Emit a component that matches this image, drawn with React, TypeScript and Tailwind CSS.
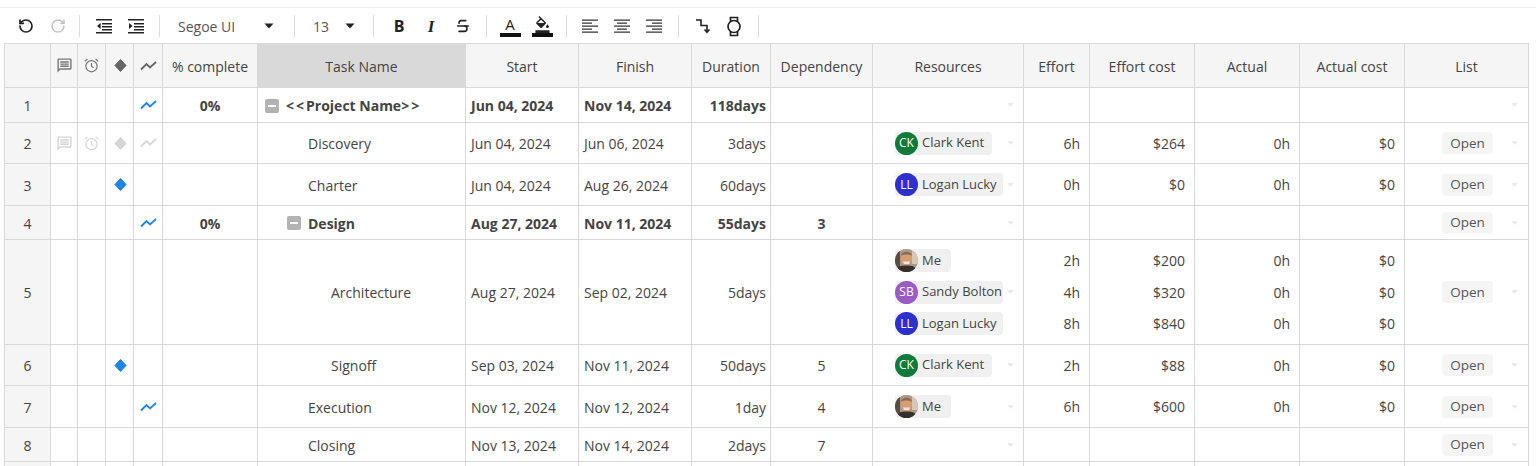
import type { ReactNode } from 'react'
import { RotateCcw, RotateCw, Strikethrough } from 'lucide-react'
import { MdFormatColorFill, MdOutlineMessage } from 'react-icons/md'

const COLS =
  'grid grid-cols-[46px_27px_28px_28px_29px_95px_208px_113px_113px_79px_102px_151px_66px_105px_105px_105px_124px]'

type Person = { name: string; initials: string; color: string; width: string }

const CLARK: Person = { name: 'Clark Kent', initials: 'CK', color: 'bg-[#0f7b3a]', width: 'w-[97px]' }
const LOGAN: Person = { name: 'Logan Lucky', initials: 'LL', color: 'bg-[#2e2fcf]', width: 'w-[108px]' }
const SANDY: Person = { name: 'Sandy Bolton', initials: 'SB', color: 'bg-[#9a5bc4]', width: 'w-[108px]' }
const ME: Person = { name: 'Me', initials: '', color: '', width: 'w-[56px]' }

type Row = {
  id: number
  height: string
  icons?: 'faded' | 'trend' | 'diamond'
  percent?: string
  name: ReactNode
  indent: string
  bold?: boolean
  expander?: boolean
  start: string
  finish: string
  duration: string
  dep?: string
  people?: Person[]
  effort?: string[]
  cost?: string[]
  actual?: string[]
  actualCost?: string[]
  list?: boolean
}

const PROJECT_NAME = (
  <>
    <span className="tracking-[2px]">&lt;&lt;</span>Project Name<span className="tracking-[2px]">&gt;&gt;</span>
  </>
)

const ROWS: Row[] = [
  { id: 1, height: 'h-[35px]', icons: 'trend', percent: '0%', name: PROJECT_NAME, indent: 'pl-[7px]', bold: true, expander: true, start: 'Jun 04, 2024', finish: 'Nov 14, 2024', duration: '118days' },
  { id: 2, height: 'h-[41px]', icons: 'faded', name: 'Discovery', indent: 'pl-[50px]', start: 'Jun 04, 2024', finish: 'Jun 06, 2024', duration: '3days', people: [CLARK], effort: ['6h'], cost: ['$264'], actual: ['0h'], actualCost: ['$0'], list: true },
  { id: 3, height: 'h-[42px]', icons: 'diamond', name: 'Charter', indent: 'pl-[50px]', start: 'Jun 04, 2024', finish: 'Aug 26, 2024', duration: '60days', people: [LOGAN], effort: ['0h'], cost: ['$0'], actual: ['0h'], actualCost: ['$0'], list: true },
  { id: 4, height: 'h-[34px]', icons: 'trend', percent: '0%', name: 'Design', indent: 'pl-[29px]', bold: true, expander: true, start: 'Aug 27, 2024', finish: 'Nov 11, 2024', duration: '55days', dep: '3', list: true },
  { id: 5, height: 'h-[105px]', name: 'Architecture', indent: 'pl-[73px]', start: 'Aug 27, 2024', finish: 'Sep 02, 2024', duration: '5days', people: [ME, SANDY, LOGAN], effort: ['2h', '4h', '8h'], cost: ['$200', '$320', '$840'], actual: ['0h', '0h', '0h'], actualCost: ['$0', '$0', '$0'], list: true },
  { id: 6, height: 'h-[41px]', icons: 'diamond', name: 'Signoff', indent: 'pl-[73px]', start: 'Sep 03, 2024', finish: 'Nov 11, 2024', duration: '50days', dep: '5', people: [CLARK], effort: ['2h'], cost: ['$88'], actual: ['0h'], actualCost: ['$0'], list: true },
  { id: 7, height: 'h-[42px]', icons: 'trend', name: 'Execution', indent: 'pl-[50px]', start: 'Nov 12, 2024', finish: 'Nov 12, 2024', duration: '1day', dep: '4', people: [ME], effort: ['6h'], cost: ['$600'], actual: ['0h'], actualCost: ['$0'], list: true },
  { id: 8, height: 'h-[34px]', name: 'Closing', indent: 'pl-[50px]', start: 'Nov 13, 2024', finish: 'Nov 14, 2024', duration: '2days', dep: '7', list: true },
]

function Sep() {
  return <div className="h-[22px] w-px shrink-0 bg-[#dcdcdc]" />
}

function Slot({ children, className = 'w-[32px]' }: { children: ReactNode; className?: string }) {
  return <div className={`flex h-[24px] shrink-0 items-center justify-center text-[#222] ${className}`}>{children}</div>
}

function Caret() {
  return (
    <svg width="10" height="6" viewBox="0 0 10 6" aria-hidden="true">
      <path d="M0.5 0.5h9L5 5.5z" fill="#222" />
    </svg>
  )
}

function TinyCaret() {
  return (
    <svg width="7" height="4" viewBox="0 0 7 4" aria-hidden="true" className="shrink-0">
      <path d="M0 0h7L3.5 4z" fill="#ebebeb" />
    </svg>
  )
}

function Indent({ flip }: { flip?: boolean }) {
  return (
    <svg width="16" height="16" viewBox="0 0 16 16" aria-hidden="true">
      <path d="M0 1h16v1.6H0zM6 5h10v1.4H6zM6 8h10v1.4H6zM6 11h10v1.4H6zM0 14h16v1.6H0z" fill="#222" />
      <path d={flip ? 'M1 5l3.6 3L1 11z' : 'M4.6 5L1 8l3.6 3z'} fill="#222" />
    </svg>
  )
}

function Align({ mode }: { mode: 'left' | 'center' | 'right' }) {
  const short =
    mode === 'left'
      ? 'M0 4.5h10v1.3H0zM0 10.5h10v1.3H0z'
      : mode === 'center'
        ? 'M3 4.5h10v1.3H3zM3 10.5h10v1.3H3z'
        : 'M6 4.5h10v1.3H6zM6 10.5h10v1.3H6z'
  return (
    <svg width="16" height="16" viewBox="0 0 16 16" aria-hidden="true">
      <path d="M0 1.5h16v1.3H0zM0 7.5h16v1.3H0zM0 13.5h16v1.3H0z" fill="#333" />
      <path d={short} fill="#333" />
    </svg>
  )
}

function WatchIcon() {
  return (
    <svg width="16" height="21" viewBox="0 0 16 21" fill="none" stroke="#222" strokeWidth="1.7" aria-hidden="true">
      <circle cx="8" cy="10.500" r="6" />
      <path d="M4.500 5.500V1.500h7v4M4.500 15.500v4h7v-4" />
    </svg>
  )
}

function AlarmIcon({ stroke }: { stroke: string }) {
  return (
    <svg width="15" height="15" viewBox="0 0 15 15" fill="none" stroke={stroke} strokeWidth="1.200" aria-hidden="true">
      <circle cx="7.500" cy="8.200" r="5.600" />
      <path d="M7.500 5v3.500l2.200 1.300M0.800 3.400L3.400 1M14.200 3.400L11.600 1" />
    </svg>
  )
}

function Toolbar() {
  return (
    <div className="flex h-[36px] items-center border-t border-[#eeeeee] pl-[10px] pt-[1px]">
      <Slot><RotateCcw size={16} strokeWidth={2.6} /></Slot>
      <Slot><RotateCw size={16} strokeWidth={2.2} className="text-[#c4c4c4]" /></Slot>
      <div className="w-[5px]" />
      <Sep />
      <div className="w-[8px]" />
      <Slot><Indent /></Slot>
      <Slot><Indent flip /></Slot>
      <div className="w-[7px]" />
      <Sep />
      <div className="flex w-[134px] shrink-0 items-center pl-[18px] pr-[20px] text-[14px] text-[#555]">
        <span className="flex-1">Segoe UI</span>
        <Caret />
      </div>
      <Sep />
      <div className="flex w-[78px] shrink-0 items-center pl-[18px] pr-[18px] text-[14px] text-[#555]">
        <span className="flex-1">13</span>
        <Caret />
      </div>
      <Sep />
      <div className="w-[9px]" />
      <Slot><span className="text-[16px] font-bold text-[#222]">B</span></Slot>
      <Slot><span className="font-['Liberation_Serif',serif] text-[17px] font-bold italic leading-none text-[#222]">I</span></Slot>
      <Slot><Strikethrough size={16} strokeWidth={2.4} /></Slot>
      <div className="w-[7px]" />
      <Sep />
      <div className="w-[7px]" />
      <Slot>
        <div className="flex w-[21px] flex-col items-center">
          <span className="text-[15px] leading-[17px] text-[#222]">A</span>
          <div className="h-[4px] w-full bg-[#111]" />
        </div>
      </Slot>
      <Slot>
        <div className="flex w-[21px] flex-col items-center">
          <MdFormatColorFill size={17} />
          <div className="h-[4px] w-full bg-[#111]" />
        </div>
      </Slot>
      <div className="w-[8px]" />
      <Sep />
      <div className="w-[7px]" />
      <Slot><Align mode="left" /></Slot>
      <Slot><Align mode="center" /></Slot>
      <Slot><Align mode="right" /></Slot>
      <div className="w-[8px]" />
      <Sep />
      <div className="w-[8px]" />
      <Slot>
        <svg width="16" height="16" viewBox="0 0 16 16" fill="none" stroke="#222" strokeWidth="1.6" aria-hidden="true">
          <path d="M1 2h5v5.500h6V14" />
          <path d="M9.500 11.500L12 14.300l2.500-2.800" />
        </svg>
      </Slot>
      <Slot className="w-[30px]"><WatchIcon /></Slot>
      <div className="w-[9px]" />
      <Sep />
    </div>
  )
}

function Comment({ className }: { className: string }) {
  return <MdOutlineMessage size={17} className={className} />
}

function Diamond({ fill }: { fill: string }) {
  return (
    <svg width="13" height="13" viewBox="0 0 13 13" aria-hidden="true">
      <path d="M6.500 0.500l5.600 6-5.600 6-5.600-6z" fill={fill} stroke={fill} strokeLinejoin="round" />
    </svg>
  )
}

function Trend({ stroke }: { stroke: string }) {
  return (
    <svg width="17" height="10" viewBox="0 0 17 10" fill="none" aria-hidden="true">
      <path d="M1 8.500L6.500 3l3.500 3.500L16 1" stroke={stroke} strokeWidth="1.800" />
    </svg>
  )
}

function HeadCell({ children, active, className = '' }: { children?: ReactNode; active?: boolean; className?: string }) {
  return (
    <div
      className={`flex items-center justify-center whitespace-nowrap border-b border-r border-[#d9d9d9] text-[14px] text-[#444] ${
        active ? 'bg-[#d9d9d9]' : 'bg-[#f5f5f5]'
      } ${className}`}
    >
      {children}
    </div>
  )
}

function Cell({ children, className = '' }: { children?: ReactNode; className?: string }) {
  return (
    <div className={`flex min-w-0 items-center overflow-hidden whitespace-nowrap border-b border-r border-[#d9d9d9] text-[14px] text-[#444] ${className}`}>
      {children}
    </div>
  )
}

function Expander() {
  return (
    <div className="mr-[7px] flex h-[14px] w-[14px] shrink-0 items-center justify-center rounded-[2px] bg-[#b3b3b3]">
      <div className="h-[2px] w-[8px] bg-white" />
    </div>
  )
}

function Photo() {
  return (
    <svg width="23" height="23" viewBox="0 0 23 23" aria-hidden="true" className="shrink-0 rounded-full">
      <rect width="23" height="23" fill="#a89a8a" />
      <rect x="0" y="0" width="5" height="23" fill="#5a4c42" />
      <rect x="17" y="0" width="6" height="15" fill="#d5c8b5" />
      <ellipse cx="11.500" cy="9.500" rx="5.500" ry="7" fill="#d89c72" />
      <path d="M6 6.500c1-5 10-5 11 0-2.500-1.500-8.500-1.500-11 0z" fill="#8a6a50" />
      <path d="M8 12.500h7l-1 2.500h-5z" fill="#f3e6d6" />
      <path d="M1 23c1-6 5-6.500 10.500-6.500s9.500 .5 10.500 6.500z" fill="#35302e" />
    </svg>
  )
}

function Pill({ person }: { person: Person }) {
  return (
    <div className={`flex h-[23px] shrink-0 items-center overflow-hidden rounded-[4px] bg-[#f0f0f0] ${person.width}`}>
      {person.initials ? (
        <div className={`flex h-[23px] w-[23px] shrink-0 items-center justify-center rounded-full text-[12px] text-white ${person.color}`}>
          {person.initials}
        </div>
      ) : (
        <Photo />
      )}
      <span className="ml-[4px] text-[13px] text-[#444]">{person.name}</span>
    </div>
  )
}

function Values({ items }: { items?: string[] }) {
  return (
    <Cell className="flex-col !items-end justify-center gap-[10px] pr-[9px] pt-[1px]">
      {items?.map((v, i) => <span key={i} className="leading-[21.5px]">{v}</span>)}
    </Cell>
  )
}

function GridRow({ row }: { row: Row }) {
  const faded = row.icons === 'faded'
  const weight = row.bold ? 'font-bold' : ''
  return (
    <div className={`${COLS} ${row.height}`}>
      <Cell className="justify-center bg-[#f5f5f5] pt-[1px]">{row.id}</Cell>
      <Cell className="justify-center">{faded && <Comment className="text-[#d6d6d6]" />}</Cell>
      <Cell className="justify-center">{faded && <AlarmIcon stroke="#d6d6d6" />}</Cell>
      <Cell className="justify-center pl-[2px]">
        {faded && <Diamond fill="#d6d6d6" />}
        {row.icons === 'diamond' && <Diamond fill="#1f84e6" />}
      </Cell>
      <Cell className="justify-center">
        {faded && <Trend stroke="#d6d6d6" />}
        {row.icons === 'trend' && <Trend stroke="#1f84e6" />}
      </Cell>
      <Cell className="justify-center pt-[1px] font-bold">{row.percent}</Cell>
      <Cell className={`${row.indent} pt-[1px] ${weight}`}>
        {row.expander && <Expander />}
        {row.name}
      </Cell>
      <Cell className={`pl-[5px] pt-[1px] ${weight}`}>{row.start}</Cell>
      <Cell className={`pl-[5px] pt-[1px] ${weight}`}>{row.finish}</Cell>
      <Cell className={`justify-end pr-[4px] pt-[1px] ${weight}`}>{row.duration}</Cell>
      <Cell className={`justify-center pt-[1px] ${weight}`}>{row.dep}</Cell>
      <Cell className="justify-between pl-[22px] pr-[9px]">
        <div className="flex flex-col gap-[8.500px]">
          {row.people?.map((p) => <Pill key={p.name} person={p} />)}
        </div>
        <TinyCaret />
      </Cell>
      <Values items={row.effort} />
      <Values items={row.cost} />
      <Values items={row.actual} />
      <Values items={row.actualCost} />
      <Cell className="justify-between pl-[37px] pr-[10px]">
        {row.list && (
          <div className="flex h-[22px] w-[51px] items-center justify-center rounded-[4px] bg-[#f5f5f5] text-[13.5px] text-[#555]">Open</div>
        )}
        <span className="flex-1" />
        <TinyCaret />
      </Cell>
    </div>
  )
}

export default function App() {
  return (
    <div className="h-[466px] overflow-hidden bg-white pt-[7px] font-['Open_Sans','Noto_Sans',sans-serif]">
      <Toolbar />
      <div className="ml-[4px] w-[1525px] border-l border-t border-[#d9d9d9]">
        <div className={`${COLS} h-[44px]`}>
          <HeadCell />
          <HeadCell><Comment className="text-[#777]" /></HeadCell>
          <HeadCell><AlarmIcon stroke="#777" /></HeadCell>
          <HeadCell className="pl-[2px]"><Diamond fill="#666" /></HeadCell>
          <HeadCell><Trend stroke="#666" /></HeadCell>
          <HeadCell className="pt-[2px]">% complete</HeadCell>
          <HeadCell active className="pt-[2px]">Task Name</HeadCell>
          <HeadCell className="pt-[2px]">Start</HeadCell>
          <HeadCell className="pt-[2px]">Finish</HeadCell>
          <HeadCell className="pt-[2px]">Duration</HeadCell>
          <HeadCell className="pt-[2px]">Dependency</HeadCell>
          <HeadCell className="pt-[2px]">Resources</HeadCell>
          <HeadCell className="pt-[2px]">Effort</HeadCell>
          <HeadCell className="pt-[2px]">Effort cost</HeadCell>
          <HeadCell className="pt-[2px]">Actual</HeadCell>
          <HeadCell className="pt-[2px]">Actual cost</HeadCell>
          <HeadCell className="pt-[2px]">List</HeadCell>
        </div>
        {ROWS.map((row) => <GridRow key={row.id} row={row} />)}
        <div className={`${COLS} h-[10px]`}>
          {Array.from({ length: 17 }).map((_, i) => (
            <div key={i} className={`border-r border-[#d9d9d9] ${i === 0 ? 'bg-[#f5f5f5]' : ''}`} />
          ))}
        </div>
      </div>
    </div>
  )
}
